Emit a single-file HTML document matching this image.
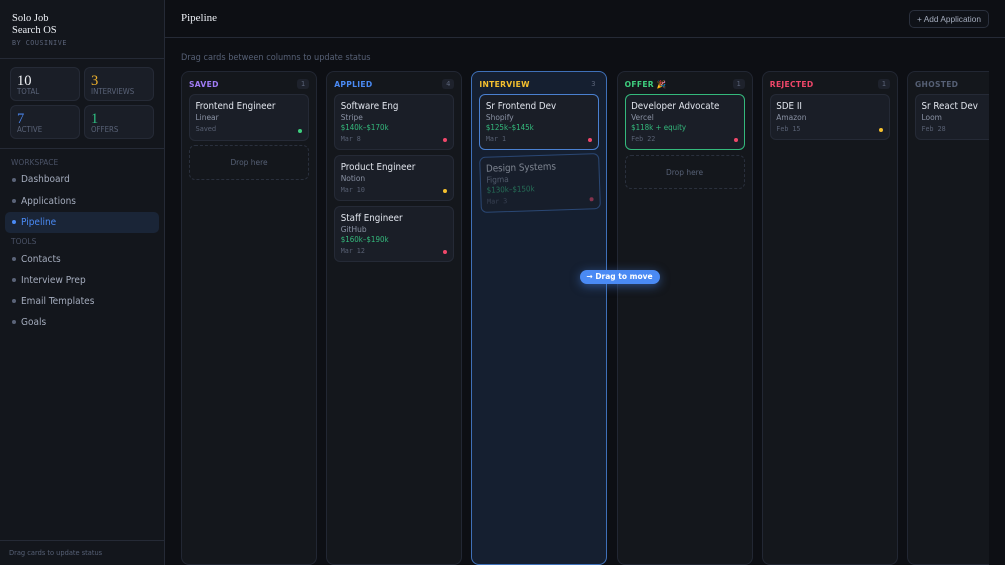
<!DOCTYPE html>
<html><head><meta charset="utf-8"><style>
*{box-sizing:border-box;margin:0;padding:0}
html,body{width:1005px;height:565px;overflow:hidden;background:#0d0f14;font-family:"DejaVu Sans",sans-serif;font-stretch:condensed;position:relative}
.a{position:absolute;white-space:nowrap}
.side{left:0;top:0;width:165px;height:565px;background:#13161c;border-right:1px solid #252a36}
.hl{height:1px;background:#252a36}
.stat{position:absolute;width:70px;height:34px;background:#1a1e27;border:1px solid #252a36;border-radius:6px}
.stat b{position:absolute;left:6px;top:3px;font:400 14.5px/20px "Liberation Serif",serif}
.stat i{position:absolute;left:6px;top:19px;font-style:normal;font-size:7.8px;line-height:10px;color:#5a6378}
.sec{left:11px;font-size:7.5px;font-stretch:normal;line-height:10px;color:#4a5266}
.nav{left:21px;font-size:10px;line-height:14px;color:#a4acbd}
.nd{position:absolute;left:12px;width:4px;height:4px;border-radius:50%;background:#5a6378}
.col{position:absolute;top:71px;width:136px;height:494px;background:#14171c;border:1px solid #222733;border-radius:8px}
.col.act{background:#151f30;border-color:#3f70b8}
.t{position:absolute;left:7px;top:8px;font-size:7.6px;font-stretch:normal;line-height:10px;font-weight:700;letter-spacing:.3px;white-space:nowrap}
.n{position:absolute;right:7px;top:7px;width:12px;height:10px;background:#1e222c;border-radius:3px;font:7px/10px "DejaVu Sans Mono",monospace;color:#5a6378;text-align:center}
.card{position:absolute;width:120px;background:#1a1e27;border:1px solid #252a36;border-radius:6px}
.card h4{position:absolute;left:5.5px;top:5.5px;font-weight:400;font-size:9.7px;line-height:12px;color:#e2e6ee;white-space:nowrap}
.card p{position:absolute;left:5.5px;top:17px;font-size:8.3px;line-height:10px;color:#8b93a5;white-space:nowrap}
.card s{position:absolute;left:5.5px;top:27.5px;font-size:7.9px;line-height:10px;color:#34b97c;text-decoration:none;white-space:nowrap}
.card u{position:absolute;left:5.5px;top:38.5px;font:6.7px/10px "DejaVu Sans Mono",monospace;color:#586073;text-decoration:none;white-space:nowrap}
.card em{position:absolute;right:6px;bottom:7px;width:4px;height:4px;border-radius:50%}
.drop{position:absolute;width:120px;border:1px dashed #2a303d;border-radius:6px;text-align:center;font-size:8.3px;color:#566075}
.r{background:#f0476a}.y{background:#f5c02e}.g{background:#3ecf7e}
</style></head><body>
<div class="a side"></div>
<div class="a" style="left:12px;top:12.5px;font:10.5px/12.5px 'Liberation Serif',serif;color:#eef1f6">Solo Job<br>Search OS</div>
<div class="a" style="left:12px;top:38px;font:6.7px/10px 'DejaVu Sans Mono',monospace;color:#5a6378;letter-spacing:.55px">BY COUSINIVE</div>
<div class="a hl" style="left:0;top:58px;width:164px"></div>
<div class="stat" style="left:10px;top:67px"><b style="color:#f0f2f6">10</b><i>TOTAL</i></div>
<div class="stat" style="left:84px;top:67px"><b style="color:#eeb12c">3</b><i>INTERVIEWS</i></div>
<div class="stat" style="left:10px;top:105px"><b style="color:#4a84ea">7</b><i>ACTIVE</i></div>
<div class="stat" style="left:84px;top:105px"><b style="color:#2fc184">1</b><i>OFFERS</i></div>
<div class="a hl" style="left:0;top:148px;width:164px"></div>
<div class="a sec" style="top:158px">WORKSPACE</div>
<div class="nd" style="top:177.5px"></div><div class="a nav" style="top:173px">Dashboard</div>
<div class="nd" style="top:198.5px"></div><div class="a nav" style="top:195px">Applications</div>
<div class="a" style="left:5px;top:212px;width:154px;height:20.5px;background:#1a2537;border-radius:5px"></div>
<div class="nd" style="top:219.5px;background:#4a8af4"></div><div class="a nav" style="top:216px;color:#4a8af4">Pipeline</div>
<div class="a sec" style="top:237px">TOOLS</div>
<div class="nd" style="top:256.5px"></div><div class="a nav" style="top:253px">Contacts</div>
<div class="nd" style="top:278px"></div><div class="a nav" style="top:274px">Interview Prep</div>
<div class="nd" style="top:299px"></div><div class="a nav" style="top:295px">Email Templates</div>
<div class="nd" style="top:320px"></div><div class="a nav" style="top:316px">Goals</div>
<div class="a hl" style="left:0;top:540px;width:164px"></div>
<div class="a" style="left:9px;top:547.5px;font-size:7.4px;line-height:10px;color:#566075">Drag cards to update status</div>

<div class="a" style="left:181px;top:11px;font:11px/15px 'Liberation Serif',serif;color:#eef1f6">Pipeline</div>
<div class="a hl" style="left:165px;top:37px;width:840px"></div>
<div class="a" style="left:909px;top:10px;width:80px;height:17.5px;background:#0f1218;border:1px solid #2a303d;border-radius:5px;text-align:center;font:8.3px/16px 'Liberation Sans',sans-serif;color:#a4acbd">+ Add Application</div>
<div class="a" style="left:181px;top:53px;font-size:9.1px;line-height:11px;color:#566075">Drag cards between columns to update status</div>

<div class="a" style="left:165px;top:60px;width:824px;height:505px;overflow:hidden">
<div class="col" style="left:16px;top:11px"><div class="t" style="color:#a07cf5">SAVED</div><div class="n">1</div>
 <div class="card" style="left:7px;top:22.3px;height:46.3px"><h4>Frontend Engineer</h4><p>Linear</p><u style="top:28.5px;font-family:'DejaVu Sans',sans-serif;font-size:6.7px">Saved</u><em class="g"></em></div>
 <div class="drop" style="left:7px;top:73px;height:34.5px;line-height:33px">Drop here</div>
</div>
<div class="col" style="left:161.2px;top:11px"><div class="t" style="color:#4a8af4">APPLIED</div><div class="n">4</div>
 <div class="card" style="left:7px;top:22.3px;height:55.5px"><h4>Software Eng</h4><p>Stripe</p><s>$140k–$170k</s><u>Mar 8</u><em class="r"></em></div>
 <div class="card" style="left:7px;top:83px;height:46.3px"><h4>Product Engineer</h4><p>Notion</p><u style="top:28.5px">Mar 10</u><em class="y"></em></div>
 <div class="card" style="left:7px;top:134px;height:55.5px"><h4>Staff Engineer</h4><p>GitHub</p><s>$160k–$190k</s><u>Mar 12</u><em class="r"></em></div>
</div>
<div class="col act" style="left:306.4px;top:11px"><div class="t" style="color:#f5c02e">INTERVIEW</div><div class="n" style="background:none">3</div>
 <div class="card" style="left:7px;top:22.3px;height:55.5px;border-color:#4a80d0"><h4>Sr Frontend Dev</h4><p>Shopify</p><s>$125k–$145k</s><u>Mar 1</u><em class="r"></em></div>
 <div class="card" style="left:7.6px;top:82.5px;height:55.5px;border-color:#3f70b8;opacity:.5;transform:rotate(-1.9deg)"><h4>Design Systems</h4><p>Figma</p><s>$130k–$150k</s><u>Mar 3</u><em class="r"></em></div>
</div>
<div class="col" style="left:451.6px;top:11px"><div class="t" style="color:#3ecf7e">OFFER 🎉</div><div class="n">1</div>
 <div class="card" style="left:7px;top:22.3px;height:55.5px;border-color:#34b97c"><h4>Developer Advocate</h4><p>Vercel</p><s>$118k + equity</s><u>Feb 22</u><em class="r"></em></div>
 <div class="drop" style="left:7px;top:83px;height:34px;line-height:32px">Drop here</div>
</div>
<div class="col" style="left:596.8px;top:11px"><div class="t" style="color:#f0476a">REJECTED</div><div class="n">1</div>
 <div class="card" style="left:7px;top:22.3px;height:46px"><h4>SDE II</h4><p>Amazon</p><u style="top:28.5px">Feb 15</u><em class="y"></em></div>
</div>
<div class="col" style="left:742px;top:11px"><div class="t" style="color:#566075">GHOSTED</div><div class="n">1</div>
 <div class="card" style="left:7px;top:22.3px;height:46px"><h4>Sr React Dev</h4><p>Loom</p><u style="top:28.5px">Feb 28</u><em class="y"></em></div>
</div>
</div>
<div class="a" style="left:579.5px;top:270px;width:80px;height:14px;background:#4a8af4;border-radius:7px;box-shadow:0 2px 10px rgba(74,138,244,.5);text-align:center;font-size:7.5px;font-stretch:normal;font-weight:700;line-height:14px;color:#fff">→ Drag to move</div>
</body></html>
